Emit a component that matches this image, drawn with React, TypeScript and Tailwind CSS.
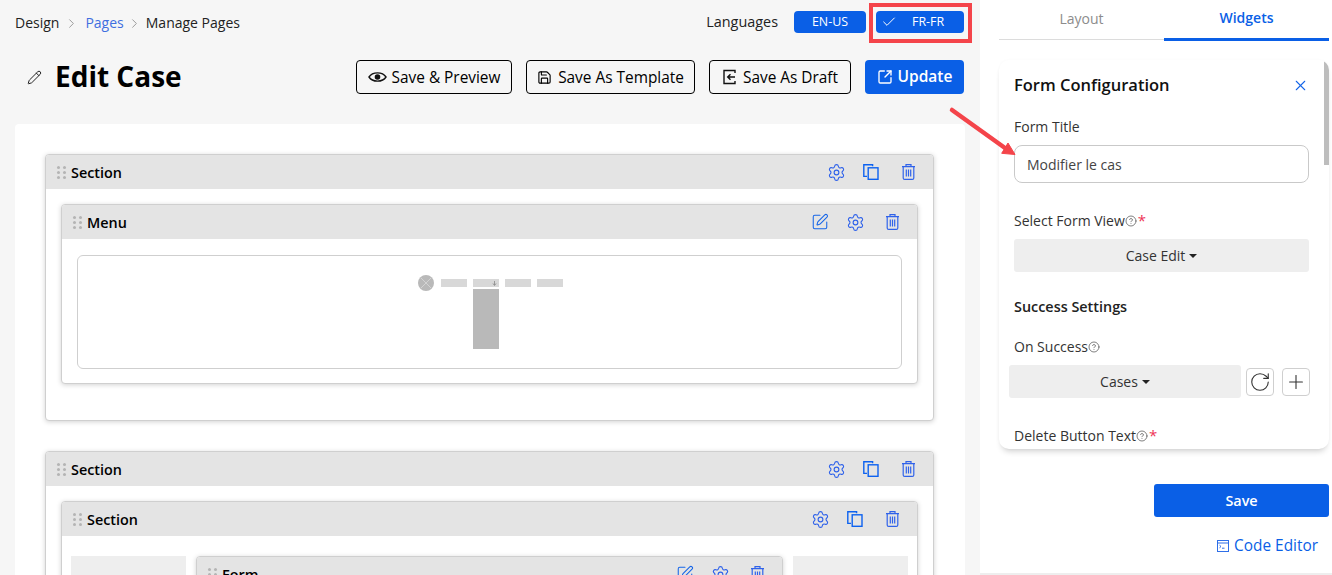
import React from "react";
import { Settings, Pencil, SquarePen, X, Check, Plus, RotateCw, Save, SquareArrowOutUpRight, ChevronRight, CircleHelp } from "lucide-react";

function CopyIcon() {
  return (
    <svg width="16" height="16" viewBox="0 0 16 16" fill="none" stroke="#0d62f0" strokeWidth="1.4" className="ml-[17px]">
      <path d="M9.6 2.2V0.8H0.8v11.6h3.2" />
      <rect x="5.2" y="3.8" width="9.8" height="11.5" />
    </svg>
  );
}
function TrashIcon({ ml }: { ml: string }) {
  return (
    <svg width="13" height="16" viewBox="0 0 13 16" fill="none" stroke="#2f62ea" strokeWidth="1.2" className={ml}>
      <path d="M0 2.6h13M4 2.5V0.7h5v1.8M1.2 2.7v11.2a1.5 1.5 0 0 0 1.5 1.5h7.6a1.5 1.5 0 0 0 1.5-1.5V2.7" />
      <path d="M4.3 5.6v7M6.5 5.6v7M8.7 5.6v7" />
    </svg>
  );
}
function Grip() {
  return (
    <div className="grid grid-cols-2 gap-x-[3px] gap-y-[2px] w-[9px] mr-[5px]">
      {[0, 1, 2, 3, 4, 5].map((i) => (
        <span key={i} className="w-[3px] h-[3px] rounded-full bg-[#b4b4b4]" />
      ))}
    </div>
  );
}
function Head({ title, edit, noCopy }: { title: string; edit?: boolean; noCopy?: boolean }) {
  return (
    <div className="h-[34px] bg-[#e4e4e4] flex items-center pl-[11px] pr-[18px] shrink-0">
      <Grip />
      <span className="text-[14.4px] font-semibold text-black pt-[2px]">{title}</span>
      <div className="ml-auto flex items-center">
        {edit && <SquarePen size={18} color="#1565e8" strokeWidth={1.4} className="mr-[17px]" />}
        <Settings size={19} color="#2f62ea" strokeWidth={1.4} />
        {!noCopy && <CopyIcon />}
        <TrashIcon ml={noCopy ? "ml-[21px]" : "ml-[23px]"} />
      </div>
    </div>
  );
}
function Box({ children, className = "" }: { children: React.ReactNode; className?: string }) {
  return (
    <div className={`bg-white border border-[#cfcfcf] rounded-[4px] shadow-[0_1px_5px_rgba(0,0,0,0.18)] overflow-hidden ${className}`}>
      {children}
    </div>
  );
}
function OutBtn({ icon, label, w, gap }: { icon: React.ReactNode; label: string; w: string; gap: string }) {
  return (
    <button className={`h-[34px] ${w} ${gap} border border-black rounded-[4px] flex items-center justify-center text-[15.4px] font-medium text-black`}>
      {icon}
      <span className="pt-[1px]">{label}</span>
    </button>
  );
}
function Help() {
  return <CircleHelp size={12} color="#555" strokeWidth={1.5} className="mt-[1px]" />;
}

export default function App() {
  return (
    <div className="relative w-[1332px] h-[575px] overflow-hidden flex bg-white text-[#222]" style={{ fontFamily: '"Open Sans", sans-serif' }}>
      {/* Left */}
      <div className="w-[980px] shrink-0 bg-[#f6f6f6] flex flex-col pl-[15px] pr-[15px]">
        <div className="h-[46px] pt-[11px] flex items-start">
          <div className="flex items-center text-[14px] h-[24px] leading-[24px]">
            <span>Design</span>
            <ChevronRight size={15} color="#888" strokeWidth={1.3} className="ml-[5px] mr-[6px]" />
            <span className="text-[#3f6fe0]">Pages</span>
            <ChevronRight size={15} color="#888" strokeWidth={1.3} className="ml-[3px] mr-[4px]" />
            <span>Manage Pages</span>
          </div>
          <div className="ml-auto mr-[1px] flex items-center h-[22px]">
            <span className="text-[14.4px] font-medium mr-[16px] mt-[-1px]">Languages</span>
            <span className="w-[72px] h-[22px] bg-[#0a5fe6] rounded-[4px] text-white text-[12.4px] font-medium flex items-center justify-center">EN-US</span>
            <span className="ml-[10px] w-[88px] h-[22px] bg-[#0a5fe6] rounded-[4px] text-white text-[12.4px] font-medium flex items-center pl-[5px]">
              <Check size={16} strokeWidth={1.5} />
              <span className="ml-[15px]">FR-FR</span>
            </span>
          </div>
        </div>
        <div className="h-[34px] mt-[14px] flex items-center">
          <Pencil size={15} color="#222" strokeWidth={1.6} className="ml-[12px]" />
          <h1 className="ml-[13px] text-[28px] font-bold text-black leading-none mt-[-2px]">Edit Case</h1>
          <div className="ml-auto mr-[1px] flex items-center gap-[14px]">
            <OutBtn w="w-[156px]" gap="gap-[5px]" icon={
              <svg width="19" height="14" viewBox="0 0 19 14" fill="none" stroke="#111" strokeWidth="1.4"><path d="M1 7C4.5 1.5 14.5 1.5 18 7 14.5 12.5 4.5 12.5 1 7Z" /><circle cx="9.5" cy="7" r="2.8" fill="#111" stroke="none" /></svg>
            } label="Save & Preview" />
            <OutBtn w="w-[169px]" gap="gap-[6px]" icon={<Save size={15} strokeWidth={1.8} />} label="Save As Template" />
            <OutBtn w="w-[142px]" gap="gap-[6px]" icon={
              <svg width="15" height="16" viewBox="0 0 15 16" fill="none" stroke="#111" strokeWidth="1.4"><path d="M13 4V1.5H2v13h11V12M13 8H6M8.5 5.3 5.7 8l2.8 2.7" /></svg>
            } label="Save As Draft" />
            <button className="w-[99px] h-[34px] bg-[#0a5fe6] rounded-[4px] text-white text-[15.5px] font-semibold flex items-center justify-center gap-[5px]">
              <SquareArrowOutUpRight size={16} strokeWidth={2} />
              Update
            </button>
          </div>
        </div>
        <div className="mt-[30px] flex-1 bg-white rounded-t-[4px] pl-[30px] pr-[31px] pt-[30px] min-h-0 overflow-hidden">
          <Box className="h-[267px]">
            <Head title="Section" />
            <div className="pt-[15px] pl-[15px] pr-[15px]">
              <Box className="h-[180px]">
                <Head title="Menu" edit noCopy />
                <div className="mt-[16px] mx-[15px] h-[114px] border border-[#cfcfcf] rounded-[6px] flex flex-col items-center pt-[19px]">
                  <div className="flex items-start gap-[6px] ml-[1px]">
                    <div className="w-[16px] h-[16px] rounded-full bg-[#b9b9b9] flex items-center justify-center mr-[1px]">
                      <X size={20} color="#d9d9d9" strokeWidth={1} className="shrink-0" />
                    </div>
                    <span className="w-[26px] h-[8px] bg-[#d8d8d8] mt-[4px]" />
                    <div className="flex flex-col mt-[4px]">
                      <span className="w-[26px] h-[8px] bg-[#d8d8d8] flex items-center justify-end pr-[2px]">
                        <svg width="5" height="5" viewBox="0 0 5 5" fill="none" stroke="#888" strokeWidth="0.8"><path d="M2.5 0v4M1 2.5l1.5 2 1.5-2" /></svg>
                      </span>
                      <span className="w-[26px] h-[60px] bg-[#b9b9b9] mt-[2px]" />
                    </div>
                    <span className="w-[26px] h-[8px] bg-[#d8d8d8] mt-[4px]" />
                    <span className="w-[26px] h-[8px] bg-[#d8d8d8] mt-[4px]" />
                  </div>
                </div>
              </Box>
            </div>
          </Box>
          <Box className="mt-[30px] h-[300px]">
            <Head title="Section" />
            <div className="pt-[15px] pl-[15px] pr-[15px]">
              <Box className="h-[300px]">
                <Head title="Section" />
                <div className="flex gap-[10px] pl-[9px] pr-[9px] pt-[20px]">
                  <div className="w-[115px] h-[100px] bg-[#eeeeee]" />
                  <Box className="flex-1 h-[100px]">
                    <Head title="Form" edit noCopy />
                  </Box>
                  <div className="w-[115px] h-[100px] bg-[#eeeeee]" />
                </div>
              </Box>
            </div>
          </Box>
        </div>
      </div>

      {/* Right */}
      <div className="w-[352px] min-w-0 shrink-0 flex flex-col pl-[19px] pr-[3px] border-b-[2px] border-[#eeeeee]">
        <div className="h-[41px] flex shrink-0">
          <div className="w-[165px] border-b border-[#dcdcdc] h-[40px] flex items-center justify-center pb-[2px] text-[14px] text-[#8c8c8c]">Layout</div>
          <div className="flex-1 border-b-[3px] border-[#0a5fe6] h-[41px] flex items-center justify-center pb-[3px] text-[14px] font-semibold text-[#0a5fe6]">Widgets</div>
        </div>
        <div className="mt-[19px] h-[389px] flex rounded-[10px] shadow-[0_0_3px_rgba(0,0,0,0.03),0_5px_6px_-3px_rgba(0,0,0,0.2)] overflow-hidden">
          <div className="flex-1 min-w-0 pl-[15px] pr-[15px] flex flex-col">
            <div className="flex items-center justify-between h-[22px] mt-[14px]">
              <span className="text-[16.5px] font-semibold text-[#111]">Form Configuration</span>
              <X size={17} color="#1565e8" strokeWidth={1.5} />
            </div>
            <label className="text-[14px] mt-[21px] leading-[20px] h-[20px] text-[#333]">Form Title</label>
            <div className="mt-[8px] h-[38px] w-[295px] border border-[#c9c9c9] rounded-[8px] flex items-center px-[12px] text-[14px] text-[#444]">Modifier le cas</div>
            <div className="mt-[27px] h-[20px] flex items-center text-[14px] text-[#333]">
              Select Form View<Help /><span className="text-[#ee3355] text-[15px] leading-none ml-[1px]">*</span>
            </div>
            <button className="mt-[9px] w-[295px] h-[33px] bg-[#eeeeee] rounded-[3px] text-[14px] text-[#333] flex items-center justify-center">
              Case Edit<span className="ml-[4px] w-0 h-0 border-x-[4px] border-x-transparent border-t-[4px] border-t-[#222]" />
            </button>
            <div className="mt-[25px] text-[14.4px] font-semibold leading-[20px] text-[#222]">Success Settings</div>
            <div className="mt-[19px] h-[20px] flex items-center text-[14px] text-[#333]">On Success<Help /></div>
            <div className="mt-[9px] ml-[-5px] mr-[-6px] flex items-center">
              <button className="w-[232px] h-[33px] bg-[#eeeeee] rounded-[3px] text-[14px] text-[#333] flex items-center justify-center">
                Cases<span className="ml-[4px] w-0 h-0 border-x-[4px] border-x-transparent border-t-[4px] border-t-[#222]" />
              </button>
              <span className="ml-[5px] w-[28px] h-[28px] border border-[#cfcfcf] rounded-[4px] flex items-center justify-center"><RotateCw size={22} color="#333" strokeWidth={1.2} className="shrink-0" /></span>
              <span className="ml-[8px] w-[28px] h-[28px] border border-[#cfcfcf] rounded-[4px] flex items-center justify-center"><Plus size={22} color="#333" strokeWidth={1.2} className="shrink-0" /></span>
            </div>
            <div className="mt-[27px] h-[20px] shrink-0 flex items-center text-[14px] text-[#333]">
              Delete Button Text<Help /><span className="text-[#ee3355] text-[15px] leading-none ml-[1px]">*</span>
            </div>
          </div>
          <div className="w-[5px] shrink-0 flex flex-col">
            <div className="h-[105px] bg-[#bdbdbd]" />
          </div>
        </div>
        <button className="mt-[35px] ml-[155px] w-[175px] h-[33px] bg-[#0a5fe6] rounded-[3px] text-white text-[14.4px] font-semibold shrink-0">Save</button>
        <div className="mt-[18px] self-end mr-[11px] flex items-center gap-[5px] text-[15.4px] font-medium text-[#0a5fe6] h-[22px]">
          <svg width="12" height="12" viewBox="0 0 12 12" fill="none" stroke="#2f6fe8" strokeWidth="1"><rect x="0.5" y="0.5" width="11" height="11" /><path d="M0.5 3h11" /><path d="M2.5 5.2 4 6.5 2.5 7.8M5 8.2h2.5" /></svg>
          Code Editor
        </div>
      </div>

      {/* Annotations */}
      <div className="absolute left-[869px] top-[3px] w-[103px] h-[40px] border-[4px] border-[#f4444a] pointer-events-none" />
      <svg className="absolute left-[945px] top-[105px] pointer-events-none" width="75" height="55" viewBox="0 0 75 55">
        <path d="M7 5 L60 43" stroke="#f4444a" strokeWidth="4.5" strokeLinecap="round" />
        <path d="M70 49.5 L56.7 48.3 L63 38 Z" fill="#f4444a" stroke="#f4444a" strokeWidth="1" strokeLinejoin="round" />
      </svg>
    </div>
  );
}
